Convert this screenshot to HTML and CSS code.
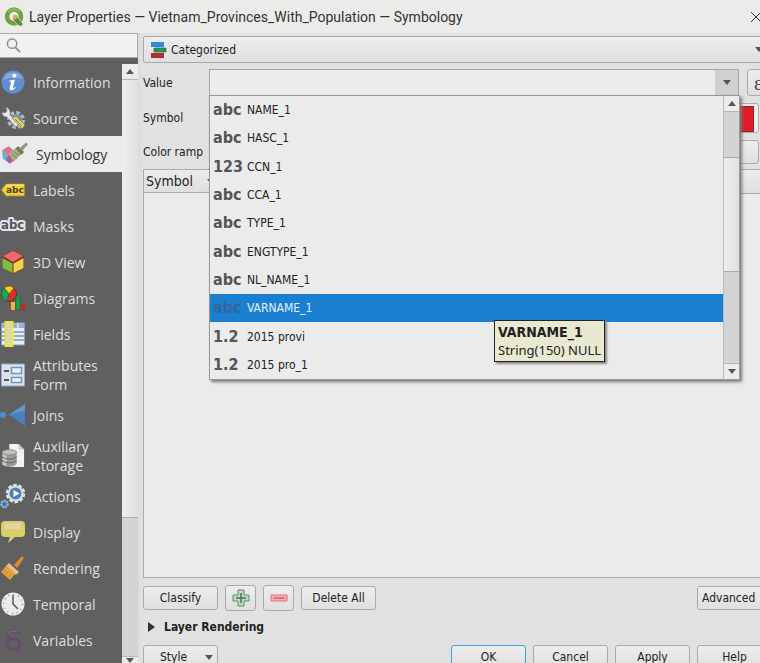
FILE: index.html
```html
<!DOCTYPE html>
<html lang="en">
<head>
<meta charset="utf-8">
<title>Layer Properties — Vietnam_Provinces_With_Population — Symbology</title>
<link rel="stylesheet" href="styles.css">
</head>
<body>
<div class="dialog">
  <header class="titlebar">
    <svg class="logo" viewBox="0 0 20 20"><circle cx="10" cy="9.500" r="7" fill="none" stroke="#6da340" stroke-width="4.500"/><path d="M4.500 5a7 7 0 0 1 11 0" fill="none" stroke="#8fbb58" stroke-width="2"/><path d="M9 9h4l6 8-1 2h-3l-6-6z" fill="#58913a" stroke="#e9ebe4" stroke-width=".7"/><path d="M9 8h4l1 2-3 3-2-1z" fill="#e6a35a"/></svg>
    <h1 class="title">Layer Properties — Vietnam_Provinces_With_Population — Symbology</h1>
    <button class="close" aria-label="Close"><svg viewBox="0 0 12 12"><path d="M1 1l10 10M11 1L1 11" stroke="#333" fill="none"/></svg></button>
  </header>

  <div class="main">
    <aside class="side">
      <label class="search">
        <svg viewBox="0 0 16 16"><circle cx="6.500" cy="6" r="5" fill="none" stroke="#8c8c8c" stroke-width="1.500"/><path d="M10 10l5 5" stroke="#8c8c8c" stroke-width="1.800"/></svg>
        <input type="search" aria-label="Search">
      </label>
      <div class="pages">
        <nav class="nav">
          <a class="item" href="#"><svg class="ico" viewBox="0 0 24 24"><circle cx="12" cy="12" r="11.500" fill="#5d8fce"/><path d="M2 10a10.500 10.500 0 0 1 20-1Q12 6 2 10z" fill="#82abdc"/><circle cx="13.500" cy="5.800" r="2" fill="#fff"/><path d="M8.500 10.500l5.500-1-2 8q0 1.200 2.200-.5l.5.800q-3.200 3-5 2.400-1.600-.6-.9-3l1.400-5.400-1.900-.3z" fill="#fff"/></svg><span>Information</span></a>
          <a class="item" href="#"><svg class="ico" viewBox="0 0 24 24"><circle cx="15" cy="14" r="7" fill="none" stroke="#a9bcd0" stroke-width="4" stroke-dasharray="3.500 2"/><circle cx="15" cy="14" r="6" fill="#8196aa"/><path d="M5 1l1 4-2 2-3-1q0 5 5 5l9 10 3-3L9 9q1-6-4-8z" fill="#e8e8e4" stroke="#777" stroke-width=".6"/><path d="M11 12l4-2 9 9-3 4z" fill="#e4d276" stroke="#7c7038" stroke-width=".7"/><path d="M14 13l7 7" stroke="#8b8145"/></svg><span>Source</span></a>
          <a class="item selected" href="#" aria-current="page"><svg class="ico" viewBox="0 0 28 24"><path d="M1 8l7-4 4 3-5 7z" fill="#d87483"/><path d="M1 8l6 6 2 8-7-5z" fill="#58b8ce"/><path d="M7 14l5-7 6 6-9 9z" fill="#d57fa5"/><path d="M9 12l7-7 6 6-9 9-5-3z" fill="#a3ae84"/><path d="M8 13l5 6-4 3-4-5z" fill="#b8559b"/><path d="M15 6l3-2 6 6-3 3z" fill="#72795a"/><path d="M19 6l7-6 2 2-6 7z" fill="#929780"/><path d="M11 12l6 5M13 9l6 5" stroke="#77835c"/></svg><span>Symbology</span></a>
          <a class="item" href="#"><svg class="ico" viewBox="0 0 24 24"><path d="M5 6h18.500v12H5l-4.500-6z" fill="#efcf39" stroke="#ad8e1c" stroke-width=".8"/><path d="M6 7h17" stroke="#ffed82"/><text class="tag-text" x="5" y="15">abc</text></svg><span>Labels</span></a>
          <a class="item" href="#"><svg class="ico" viewBox="0 0 24 24"><text class="mask-text" x="0" y="15">abc</text></svg><span>Masks</span></a>
          <a class="item" href="#"><svg class="ico" viewBox="0 0 24 24"><path d="M12 .5L23 6v12l-11 6L1 18V6z" fill="#833026"/><path d="M12 1l10 5-10 6L2 6z" fill="#ee6970"/><path d="M1.500 8l10 5.500V23l-10-5z" fill="#75c33e"/><path d="M12.500 13.500L22.500 8v10l-10 5z" fill="#f4d545"/></svg><span>3D View</span></a>
          <a class="item" href="#"><svg class="ico" viewBox="0 0 24 24"><circle cx="8" cy="8" r="7.500" fill="#e02c2b" stroke="#513822"/><path d="M8 8L3 2a8 8 0 0 1 10 0z" fill="#f7cd25" stroke="#6b4a18" stroke-width=".6"/><path d="M8 8L3 2A8 8 0 0 0 6 15.500z" fill="#19a354" stroke="#195b31" stroke-width=".6"/><path d="M10 16h4v8h-4z" fill="#f0b72a"/><path d="M15 10h4v14h-4z" fill="#16a353" stroke="#2e5a3c" stroke-width=".7"/><path d="M20 18h4v6h-4z" fill="#bd2925"/></svg><span>Diagrams</span></a>
          <a class="item" href="#"><svg class="ico" viewBox="0 0 24 24"><path d="M.5 1h23v22H.5z" fill="#e8edf4" stroke="#7f9fc4"/><path d="M1 1.500h22V6H1z" fill="#8fb0d9"/><path d="M1 10h22M1 14h22M1 18h22" stroke="#8595aa" stroke-width="1.500"/><path d="M12 6v17M17 1v5" stroke="#fff"/><path d="M4.500 0h7v24h-7z" fill="#d9d6bd" stroke="#efe336" stroke-width="2"/></svg><span>Fields</span></a>
          <a class="item" href="#"><svg class="ico" viewBox="0 0 24 24"><path d="M.5 1h23v22H.5z" fill="#dbe2ea" stroke="#8fabca"/><path d="M3 8h5M3 17h5" stroke="#555" stroke-width="2"/><path d="M10.500 4.500h10v6h-10zM10.500 14.500h10v5h-10z" fill="#eef2f6" stroke="#6f95c3" stroke-width="1.500"/></svg><span>Attributes<br>Form</span></a>
          <a class="item" href="#"><svg class="ico" viewBox="0 0 24 24"><path d="M8 12L24 1v22z" fill="#4a81bd"/><path d="M8 12L24 1v6z" fill="#6797c9"/><path d="M0 12h9" stroke="#3f6f9f"/><circle cx="2" cy="12" r="3" fill="#538cc8"/></svg><span>Joins</span></a>
          <a class="item" href="#"><svg class="ico" viewBox="0 0 24 26"><path d="M8 0h10l6 6v19H8z" fill="#f2f2f0"/><path d="M18 0v6h6z" fill="#c9c9c9"/><path d="M0 9v13q8 6 16 0V9z" fill="#9b9b98"/><path d="M2 10v13M4 10v14" stroke="#c9c9c6" stroke-width="2"/><ellipse cx="8" cy="9" rx="8" ry="3" fill="#bfbfbc" stroke="#747471" stroke-width=".7"/><path d="M0 14q8 5 16 0M0 18q8 5 16 0" stroke="#5f5f5d" fill="none"/></svg><span>Auxiliary<br>Storage</span></a>
          <a class="item" href="#"><svg class="ico" viewBox="0 0 24 24"><circle cx="14.500" cy="9.500" r="8.500" fill="none" stroke="#e0e0e0" stroke-width="2.500" stroke-dasharray="3.700 1.640"/><circle cx="14.500" cy="9.500" r="8" fill="#e0e0e0"/><circle cx="14.500" cy="9.500" r="6" fill="#4c80bf"/><path d="M12.500 6v7l6-3.500z" fill="#fff"/><circle cx="3.500" cy="20" r="3.500" fill="#5e90c8" stroke="#a5c1de" stroke-width="1.400" stroke-dasharray="2 1"/><circle cx="3.500" cy="20" r="1.200" fill="#335f91"/></svg><span>Actions</span></a>
          <a class="item" href="#"><svg class="ico" viewBox="0 0 24 24"><path d="M4 1h16q4 0 4 4v8q0 4-4 4h-6l-7 6 2-6H4q-4 0-4-4V5q0-4 4-4z" fill="#d8cf6b"/><path d="M4 3h16v6H4z" fill="#ded99b"/></svg><span>Display</span></a>
          <a class="item" href="#"><svg class="ico" viewBox="0 0 24 24"><path d="M13 9l8-9 2 2-7 10z" fill="#dd8b31"/><path d="M8 7l10 9-3 3L5 10z" fill="#e7bd83"/><path d="M5 10l9 8-5 6-9-8z" fill="#e6a03e"/><path d="M4 13l-1 4M7 15l-2 4M10 17l-2 4" stroke="#cf8a30"/></svg><span>Rendering</span></a>
          <a class="item" href="#"><svg class="ico" viewBox="0 0 24 24"><circle cx="12" cy="12" r="11.500" fill="#e9ece9"/><circle cx="12" cy="12" r="9.500" fill="none" stroke="#8b8f8b" stroke-width="1.500" stroke-dasharray="1 3.970"/><path d="M12 3v9l5 5" fill="none" stroke="#555" stroke-width="1.500"/></svg><span>Temporal</span></a>
          <a class="item" href="#"><svg class="ico" viewBox="0 0 24 24"><path d="M18 7q0-4-5-4-6 0-6 4 0 4 6 4 6 1 6 5 0 5-6 5-7 0-7-4.500Q6 12 13 11" fill="none" stroke="#674a72" stroke-width="2.500"/><path d="M16 4q-7-3-9 2" fill="none" stroke="#85708e"/></svg><span>Variables</span></a>
          <a class="item" href="#" aria-label="More"><svg class="ico" viewBox="0 0 24 24"><path d="M7 0h9l4 4v18H7z" fill="#828282"/></svg></a>
        </nav>
        <div class="scroll side-scroll"><span class="cap"><i class="up"></i></span><span class="thumb"></span><span class="track"></span><span class="cap end"><i class="down"></i></span></div>
      </div>
    </aside>

    <section class="content">
      <div class="renderer">
        <svg class="cat" viewBox="0 0 16 18"><path d="M0 1h13v5H0z" fill="#278dd5"/><path d="M3 7h12v4H3z" fill="#25945b" stroke="#416452" stroke-width=".8"/><path d="M0 12h13v5H0z" fill="#a93127"/></svg>
        <select aria-label="Renderer"><option>Categorized</option></select>
        <i class="down"></i>
      </div>

      <div class="form">
        <label for="value">Value</label>
        <div class="row value-row">
          <div class="combo">
            <input id="value" type="text" role="combobox" aria-expanded="true" aria-controls="fields">
            <button class="drop" aria-label="Show fields"><i class="down"></i></button>
            <div class="popup">
              <ul class="options" id="fields" role="listbox">
                <li role="option"><b>abc</b>NAME_1</li>
                <li role="option"><b>abc</b>HASC_1</li>
                <li role="option"><b>123</b>CCN_1</li>
                <li role="option"><b>abc</b>CCA_1</li>
                <li role="option"><b>abc</b>TYPE_1</li>
                <li role="option"><b>abc</b>ENGTYPE_1</li>
                <li role="option"><b>abc</b>NL_NAME_1</li>
                <li role="option" aria-selected="true"><b>abc</b>VARNAME_1</li>
                <li role="option"><b>1.2</b>2015 provi</li>
                <li role="option"><b>1.2</b>2015 pro_1</li>
              </ul>
              <div class="scroll popup-scroll"><span class="cap"><i class="up"></i></span><span class="track before"></span><span class="thumb"></span><span class="track after"></span><span class="cap end"><i class="down"></i></span></div>
              <div class="tooltip" role="tooltip"><strong>VARNAME_1</strong><span>String(150) NULL</span></div>
            </div>
          </div>
          <button class="btn expr">ε</button>
        </div>
        <label for="symbol">Symbol</label>
        <div class="row"><button class="btn symbol" id="symbol" aria-label="Symbol preview"><span class="swatch"></span></button></div>
        <label for="ramp">Color ramp</label>
        <div class="row ramp-row"><button class="btn ramp" id="ramp" aria-label="Color ramp preview"></button></div>
      </div>

      <div class="classes">
        <table>
          <thead><tr><th class="sym">Symbol <i class="down"></i></th><th></th></tr></thead>
          <tbody></tbody>
        </table>
      </div>

      <div class="actions">
        <button class="btn wide">Classify</button>
        <button class="btn square" aria-label="Add"><svg viewBox="0 0 18 18"><path d="M6 1h6v5h5v6h-5v5H6v-5H1V6h5z" fill="#c2d8c7" stroke="#5f8d6c"/><path d="M9 4v10M4 9h10" stroke="#447b54" stroke-width="1.500"/></svg></button>
        <button class="btn square" aria-label="Remove"><svg viewBox="0 0 18 18"><path d="M1 6h16v6H1z" fill="#f4b2b5" stroke="#de7077"/><path d="M3.500 9h11" stroke="#de5b64" stroke-width="1.500"/></svg></button>
        <button class="btn wide">Delete All</button>
        <button class="btn advanced">Advanced</button>
      </div>
      <button class="group"><i class="right"></i>Layer Rendering</button>
      <footer class="footer">
        <button class="btn wide style">Style<i class="down"></i></button>
        <button class="btn wide ok">OK</button>
        <button class="btn wide">Cancel</button>
        <button class="btn wide">Apply</button>
        <button class="btn wide">Help</button>
      </footer>
    </section>
  </div>
</div>
</body>
</html>
```
FILE: styles.css
```css
* { box-sizing: border-box; }

body {
  margin: 0;
  background: #e1e1e1;
  color: #222;
  font: 12px/16px "DejaVu Sans Condensed", "Noto Sans", sans-serif;
}

button, input, select { margin: 0; padding: 0; font: inherit; color: inherit; }
svg { display: block; flex: none; }

.dialog { display: flex; flex-direction: column; height: 100vh; overflow: hidden; }

.titlebar { display: flex; align-items: center; flex: none; height: 33px; padding-left: 4px; background: #ebebea; overflow: hidden; }
.logo { width: 20px; height: 20px; }
.title { flex: 1; margin: 0 0 0 5px; font: 14px/20px Roboto, sans-serif; white-space: nowrap; color: #333; }
.close { border: 0; background: none; margin-right: -2px; }
.close svg { width: 12px; height: 12px; }

.main { display: flex; flex: 1; min-height: 0; }

/* Page list */
.side { display: flex; flex-direction: column; flex: none; width: 138px; background: #606060; }
.search { display: flex; align-items: center; flex: none; height: 25px; padding-left: 6px; background: #f1f1f1; border: 1px solid #aaa; border-left: 0; }
.search svg { width: 15px; height: 15px; }
.search input { flex: 1; min-width: 0; border: 0; outline: 0; background: none; appearance: none; }
.pages { display: flex; flex: 1; min-height: 0; padding-top: 6px; }
.nav { flex: 1; overflow: hidden; }
.item { display: flex; align-items: center; gap: 8px; min-height: 36px; padding: 4px 0 4px 1px; color: #dedede; font: 14px/19px "Open Sans", sans-serif; text-decoration: none; }
.item:has(br) { height: 45px; }
.ico { width: 24px; height: 24px; overflow: visible; }
.selected { background: #ebebeb; color: #333; }
.selected .ico { width: 27px; }
.tag-text { font: bold 9px "DejaVu Sans", sans-serif; fill: #4b431c; }
.mask-text { font: bold 13px "DejaVu Sans Condensed", sans-serif; fill: #555; stroke: #dfe6ef; stroke-width: 4px; paint-order: stroke; stroke-linejoin: round; }

/* Arrows */
.up, .down, .right { display: block; flex: none; border: 4px solid transparent; }
.up { border-top: 0; border-bottom: 5px solid #555; }
.down { border-bottom: 0; border-top: 5px solid #555; }
.right { border: 5px solid transparent; border-right: 0; border-left: 7px solid #333; }

/* Scroll bars */
.scroll { display: flex; flex-direction: column; flex: none; width: 16px; background: #d4d4d4; }
.cap { display: flex; align-items: center; justify-content: center; flex: none; height: 16px; background: #ececec; border-bottom: 1px solid #b5b5b5; }
.cap.end { border-bottom: 0; border-top: 1px solid #b5b5b5; }
.thumb { background: linear-gradient(90deg, #eee, #e0e0e0); }
.side-scroll .thumb { flex: 438; border-bottom: 1px solid #aaa; }
.side-scroll .track { flex: 138; }
.side-scroll .cap.end { height: 7px; align-items: flex-end; }

/* Settings */
.content { display: flex; flex-direction: column; flex: 1; min-width: 0; padding: 3px 0 0 5px; background: linear-gradient(90deg, #dcdcdc, #e1e1e1 5px); }
.btn, .renderer { border: 1px solid #aaa; border-radius: 3px; background: linear-gradient(#ededed, #dfdfdf); }
.renderer { display: flex; align-items: center; gap: 4px; flex: none; height: 27px; margin-right: -4px; padding-left: 7px; border-radius: 2px; }
.cat { width: 16px; height: 18px; }
.renderer select { flex: 1; border: 0; background: none; appearance: none; }

.form { display: grid; grid-template-columns: 66px 1fr; grid-template-rows: 27px 30px 24px; row-gap: 7px; align-items: center; margin-top: 6px; }
.row { display: flex; align-items: center; height: 100%; }
.value-row { gap: 8px; }
.combo { position: relative; display: flex; flex: 1; height: 27px; border: 1px solid #a5a5a5; background: #ececec; }
.combo input { flex: 1; min-width: 0; border: 0; outline: 0; background: none; }
.drop { display: flex; align-items: center; justify-content: center; width: 23px; border: 0; background: #d0d0d0; }
.expr { flex: none; width: 26px; height: 27px; margin-right: -13px; padding-left: 6px; text-align: left; font: 20px/20px "Liberation Serif", serif; color: #534656; }
.symbol { flex: 1; height: 30px; margin-right: 1px; padding: 2px 4px; background: #eee; }
.swatch { display: block; height: 26px; background: #df1c25; border: 1px solid #8e2427; }
.ramp-row { align-items: stretch; }
.ramp { flex: 1; margin-right: 1px; }

.popup { position: absolute; z-index: 1; top: 25px; left: -1px; right: -2px; display: flex; height: 285px; border: 1px solid #999; background: #ebebeb; box-shadow: 2px 2px 3px #777; }
.options { display: grid; grid-auto-rows: 1fr; flex: 1; margin: 0; padding: 0; list-style: none; }
.options li { display: flex; align-items: center; padding-left: 3px; }
.options b { width: 34px; font: bold 16px/20px "DejaVu Sans Condensed", sans-serif; color: #555; }
.options [aria-selected] { background: #1b7fd1; color: #e6f2fc; }
.options [aria-selected] b { color: #31679b; }
.popup-scroll { border-left: 1px solid #bbb; }
.popup-scroll .before { flex: 46; }
.popup-scroll .thumb { flex: 114; border: solid #aaa; border-width: 1px 0; }
.popup-scroll .after { flex: 92; }
.tooltip { position: absolute; top: 224px; left: 284px; display: flex; flex-direction: column; padding: 2px 3px; border: 1px solid #222; background: #e9e9d2; box-shadow: 2px 2px 2px #888; font: 14px/18px "DejaVu Sans Condensed", sans-serif; white-space: nowrap; }
.tooltip span { font: 13px/18px "Noto Sans", sans-serif; }

.classes { flex: 1; min-height: 0; margin: 5px -2px 0 0; border: 1px solid #aaa; background: #ebebeb; }
.classes table { width: 100%; border-collapse: collapse; }
.classes th { height: 23px; padding: 0 2px; background: linear-gradient(#ebebeb, #dfdfdf); border-bottom: 1px solid #aaa; font: 14px/18px "DejaVu Sans Condensed", sans-serif; text-align: left; }
.classes .sym { display: flex; align-items: center; gap: 14px; }

.actions { display: flex; align-items: center; gap: 7px; flex: none; margin-top: 7px; }
.btn.wide { width: 75px; height: 24px; }
.btn.square { display: flex; align-items: center; justify-content: center; width: 31px; height: 26px; }
.square svg { width: 18px; height: 18px; }
.btn.advanced { height: 24px; width: 76px; margin: 0 -13px 0 auto; padding-left: 4px; text-align: left; }
.group { display: flex; align-items: center; gap: 9px; flex: none; height: 16px; margin-top: 8px; padding-left: 5px; border: 0; background: none; font-weight: bold; }
.footer { display: flex; gap: 7px; flex: none; height: 18px; margin: 10px -12px 0 0; }
.footer .style { display: flex; align-items: center; justify-content: space-between; margin-right: auto; padding: 0 4px 0 16px; }
.footer .ok { border-color: #3f9fd8; }
```
